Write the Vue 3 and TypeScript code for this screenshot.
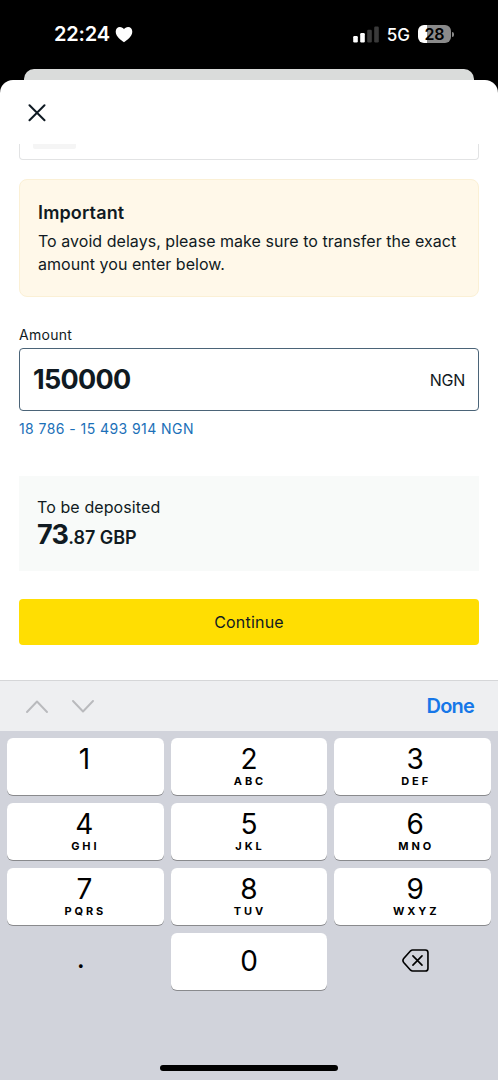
<script setup lang="ts">
import { ref } from 'vue'

interface Key {
  digit: string
  letters?: string
  kind?: 'dot' | 'zero' | 'delete'
}

const amount = ref('150000')

const keys: Key[] = [
  { digit: '1', letters: '' },
  { digit: '2', letters: 'ABC' },
  { digit: '3', letters: 'DEF' },
  { digit: '4', letters: 'GHI' },
  { digit: '5', letters: 'JKL' },
  { digit: '6', letters: 'MNO' },
  { digit: '7', letters: 'PQRS' },
  { digit: '8', letters: 'TUV' },
  { digit: '9', letters: 'WXYZ' },
  { digit: '.', kind: 'dot' },
  { digit: '0', kind: 'zero' },
  { digit: '', kind: 'delete' },
]

function press(key: Key) {
  if (key.kind === 'delete') amount.value = amount.value.slice(0, -1)
  else amount.value += key.digit
}
</script>

<template>
  <div class="screen">
    <header class="status">
      <div class="clock">
        <span class="time">22:24</span>
        <svg class="heart" width="18" height="17" viewBox="0 0 18 17">
          <path d="M9 16.2C6.6 14.5 .7 10.4 .7 5.7C.7 3 2.5 1 4.9 1C6.7 1 8.200 2 9 3.200C9.800 2 11.300 1 13.100 1C15.500 1 17.300 3 17.300 5.700C17.300 10.400 11.400 14.500 9 16.200Z" fill="#fff" />
        </svg>
      </div>
      <div class="indicators">
        <svg class="signal" width="26" height="17" viewBox="0 0 26 17">
          <rect x="0.200" y="10" width="4.600" height="6.500" rx="1.200" fill="#fff" />
          <rect x="7.200" y="7" width="4.600" height="9.500" rx="1.200" fill="#fff" />
          <rect x="14.200" y="3.700" width="4.600" height="12.800" rx="1.200" fill="#3a3a3a" />
          <rect x="21.200" y="0.500" width="4.600" height="16" rx="1.200" fill="#3a3a3a" />
        </svg>
        <span class="network">5G</span>
        <span class="battery"><span class="level">28</span><i class="cap"></i></span>
      </div>
    </header>

    <div class="back-sheet"></div>

    <main class="sheet">
      <div class="topbar">
        <svg class="close" width="18" height="18" viewBox="0 0 18 18">
          <path d="M1.500 1.200L16.500 16.200M16.500 1.200L1.500 16.200" stroke="#0f1a23" stroke-width="2" stroke-linecap="round" />
        </svg>
      </div>

      <div class="content">
        <div class="prev-card"><div class="chip"></div></div>

        <section class="notice">
          <h2>Important</h2>
          <p>To avoid delays, please make sure to transfer the exact<br />amount you enter below.</p>
        </section>

        <div class="label">Amount</div>
        <div class="field">
          <span class="value">{{ amount }}</span>
          <span class="currency">NGN</span>
        </div>
        <div class="hint">18 786 - 15 493 914 NGN</div>

        <section class="deposit">
          <div class="deposit-label">To be deposited</div>
          <div class="deposit-sum"><span class="big">73</span><span class="small">.87 GBP</span></div>
        </section>

        <button class="continue">Continue</button>
      </div>
    </main>

    <footer class="keyboard">
      <div class="toolbar">
        <div class="arrows">
          <svg width="22" height="13" viewBox="0 0 22 13">
            <path d="M1 12L11 1.500L21 12" fill="none" stroke="#b9babd" stroke-width="1.900" stroke-linecap="round" stroke-linejoin="round" />
          </svg>
          <svg width="22" height="13" viewBox="0 0 22 13">
            <path d="M1 1L11 11.500L21 1" fill="none" stroke="#b9babd" stroke-width="1.900" stroke-linecap="round" stroke-linejoin="round" />
          </svg>
        </div>
        <span class="done">Done</span>
      </div>
      <div class="keys">
        <button v-for="(key, i) in keys" :key="i" class="key" :class="key.kind" @click="press(key)">
          <svg v-if="key.kind === 'delete'" width="27" height="23" viewBox="0 0 28 24">
            <path d="M11 1H24.300Q27 1 27 3.700V20.300Q27 23 24.300 23H11Q9.800 23 8.900 22.100L1.700 14Q.100 12 1.700 10L8.900 1.900Q9.800 1 11 1Z" fill="none" stroke="#000" stroke-width="1.700" />
            <path d="M11.300 7.200L20.800 16.800M20.800 7.200L11.300 16.800" stroke="#000" stroke-width="1.700" stroke-linecap="round" />
          </svg>
          <template v-else>
            <span class="digit">{{ key.digit }}</span>
            <span v-if="key.letters" class="letters">{{ key.letters }}</span>
          </template>
        </button>
      </div>
      <div class="home"></div>
    </footer>
  </div>
</template>

<style>
body {
  margin: 0;
  background: #000;
}
</style>

<style scoped>
.screen {
  width: 498px;
  height: 1080px;
  display: flex;
  flex-direction: column;
  overflow: hidden;
  background: #000;
  color: #101a22;
  font-family: Inter, "Liberation Sans", sans-serif;
}
button {
  border: 0;
  padding: 0;
  font-family: inherit;
  color: inherit;
}
.status {
  height: 69px;
  flex: none;
  box-sizing: border-box;
  padding: 22px 44px 0 54px;
  display: flex;
  justify-content: space-between;
  color: #fff;
}
.clock,
.indicators {
  display: flex;
  align-items: center;
  height: 24px;
}
.time {
  font-size: 20px;
  line-height: 24px;
  font-weight: 600;
  letter-spacing: -0.200px;
}
.heart {
  margin-left: 5px;
}
.signal {
  margin-right: 8px;
}
.network {
  font-size: 17px;
  font-weight: 500;
  margin-right: 8px;
  padding-top: 1px;
}
.battery {
  display: flex;
  align-items: center;
}
.level {
  width: 33px;
  height: 18px;
  border-radius: 6px;
  background: linear-gradient(90deg, #fff 28%, #8a8a8a 28%);
  color: #000;
  font-size: 16px;
  line-height: 18px;
  font-weight: 600;
  text-align: center;
}
.cap {
  width: 2px;
  height: 5px;
  margin-left: 1px;
  border-radius: 0 2px 2px 0;
  background: #8a8a8a;
}
.back-sheet {
  flex: none;
  height: 11px;
  margin: 0 24px;
  border-radius: 10px 10px 0 0;
  background: #dadcdb;
}
.sheet {
  flex: none;
  height: 600px;
  background: #fff;
  border-radius: 13px 13px 0 0;
}
.topbar {
  height: 64px;
  box-sizing: border-box;
  padding: 24px 28px 0;
}
.close {
  display: block;
}
.content {
  padding: 0 19px;
}
.prev-card {
  height: 16px;
  box-sizing: border-box;
  border: 1px solid #e2e3e4;
  border-top: 0;
  border-radius: 0 0 4px 4px;
  padding-left: 13px;
}
.chip {
  width: 43px;
  height: 5px;
  background: #f5f5f5;
  border-radius: 0 0 2px 2px;
}
.notice {
  margin-top: 19px;
  height: 118px;
  box-sizing: border-box;
  border: 1px solid #fbf0d5;
  border-radius: 8px;
  background: #fff8e9;
  padding: 21px 18px 0;
}
.notice h2 {
  margin: 0;
  font-size: 18px;
  line-height: 24px;
  font-weight: 600;
  letter-spacing: 0.150px;
}
.notice p {
  margin: 4px 0 0;
  padding-top: 1px;
  font-size: 16px;
  line-height: 23px;
  letter-spacing: 0.040px;
  white-space: nowrap;
}
.label {
  margin-top: 28px;
  height: 20px;
  line-height: 20px;
  font-size: 14px;
  letter-spacing: 0.300px;
}
.field {
  margin-top: 3px;
  height: 63px;
  box-sizing: border-box;
  border: 1px solid #4b6478;
  border-radius: 4px;
  padding: 0 13px;
  display: flex;
  align-items: center;
  justify-content: space-between;
}
.value {
  font-size: 27px;
  font-weight: 700;
  letter-spacing: -0.700px;
}
.currency {
  font-size: 16px;
  letter-spacing: -0.300px;
}
.hint {
  margin-top: 8px;
  height: 20px;
  line-height: 20px;
  font-size: 14px;
  letter-spacing: 0.430px;
  color: #1b70b8;
}
.deposit {
  margin-top: 37px;
  height: 95px;
  box-sizing: border-box;
  background: #f8faf9;
  padding: 20px 18px 0;
}
.deposit-label {
  font-size: 16px;
  line-height: 22px;
  letter-spacing: 0.100px;
}
.deposit-sum {
  margin-top: 1px;
  line-height: 32px;
  height: 32px;
  white-space: nowrap;
}
.big {
  font-size: 27px;
  font-weight: 700;
  letter-spacing: -0.700px;
}
.small {
  font-size: 18px;
  font-weight: 600;
  letter-spacing: -0.050px;
}
.continue {
  display: block;
  width: 100%;
  height: 46px;
  margin-top: 28px;
  border-radius: 4px;
  background: #ffde02;
  font-size: 16px;
  letter-spacing: 0.200px;
}
.keyboard {
  flex: none;
  height: 400px;
  display: flex;
  flex-direction: column;
  background: #d1d3db;
}
.toolbar {
  flex: none;
  height: 51px;
  box-sizing: border-box;
  border-top: 1px solid #d5d6d8;
  background: #eeeff1;
  padding: 0 24px 0 26px;
  display: flex;
  align-items: center;
  justify-content: space-between;
}
.arrows {
  display: flex;
  gap: 24px;
}
.arrows svg {
  display: block;
}
.done {
  font-size: 20px;
  font-weight: 600;
  letter-spacing: -0.800px;
  color: #1677e8;
}
.keys {
  display: grid;
  grid-template-columns: repeat(3, 1fr);
  grid-auto-rows: 57px;
  gap: 8px 7px;
  padding: 7px 7px 0;
}
.key {
  display: flex;
  flex-direction: column;
  align-items: center;
  border-radius: 6px;
  background: #fff;
  box-shadow: 0 1px 0 #898a8d;
  color: #000;
}
.key:nth-child(3n) {
  padding-left: 5px;
}
.key:nth-child(3n + 1) {
  padding-right: 2px;
}
.digit {
  margin-top: 5px;
  height: 32px;
  line-height: 32px;
  font-size: 28px;
}
.letters {
  height: 13px;
  line-height: 13px;
  font-size: 11px;
  font-weight: 700;
  letter-spacing: 2.900px;
  padding-left: 2px;
}
.dot,
.delete {
  background: transparent;
  box-shadow: none;
  justify-content: center;
}
.dot .digit {
  margin: 0 7px 7px 0;
}
.zero .digit {
  margin-top: 12px;
}
.delete svg {
  margin: 0 0 2px 1px;
}
.home {
  width: 178px;
  height: 6px;
  border-radius: 3px;
  background: #000;
  margin: auto auto 9px;
}
</style>
